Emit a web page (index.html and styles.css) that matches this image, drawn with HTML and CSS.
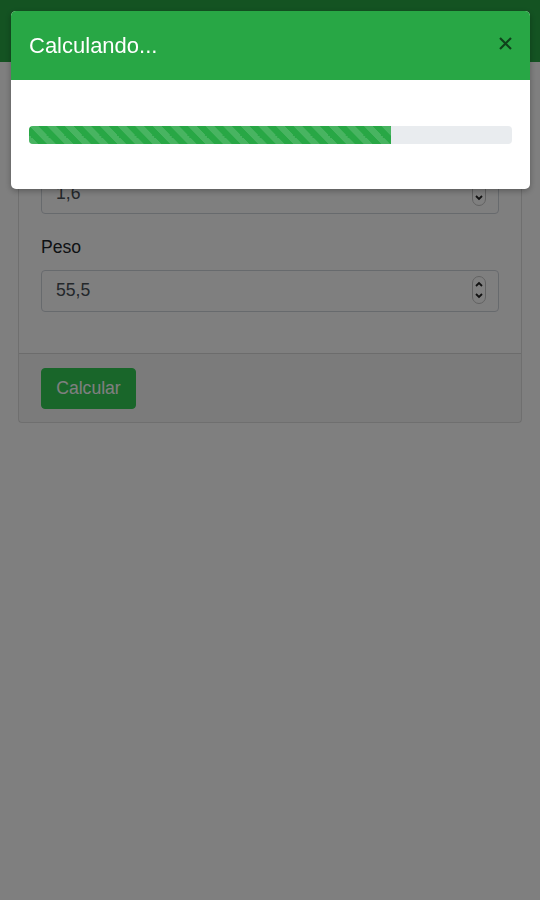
FILE: index.html
```html
<!DOCTYPE html>
<html lang="pt">
<head>
    <meta charset="UTF-8">
    <meta name="viewport" content="width=device-width, initial-scale=1.0">
    <title>Calculadora IMC</title>
    <link rel="stylesheet" href="styles.css">
</head>
<body>
    <nav class="navbar"></nav>

    <div class="page">
        <div class="card">
            <div class="card-body">
                <div class="form-group">
                    <label for="altura">Altura</label>
                    <div class="field">
                        <input type="text" id="altura" class="form-control" value="1,6">
                        <span class="spin">
                            <svg width="8" height="22" viewBox="0 0 8 22"><path d="M1 7 L4 4 L7 7 M1 15 L4 18 L7 15" fill="none" stroke="#222" stroke-width="1.8"/></svg>
                        </span>
                    </div>
                </div>
                <div class="form-group">
                    <label for="peso">Peso</label>
                    <div class="field">
                        <input type="text" id="peso" class="form-control" value="55,5">
                        <span class="spin">
                            <svg width="8" height="22" viewBox="0 0 8 22"><path d="M1 7 L4 4 L7 7 M1 15 L4 18 L7 15" fill="none" stroke="#222" stroke-width="1.8"/></svg>
                        </span>
                    </div>
                </div>
            </div>
            <div class="card-footer">
                <button class="btn">Calcular</button>
            </div>
        </div>
    </div>

    <!-- loading modal -->
    <div class="backdrop"></div>
    <div class="modal">
        <div class="modal-header">
            <h5 class="modal-title">Calculando...</h5>
            <button class="close" aria-label="Fechar">
                <svg width="13" height="13" viewBox="0 0 13 13"><path d="M1 1 L12 12 M12 1 L1 12" stroke="#000" stroke-width="2.2"/></svg>
            </button>
        </div>
        <div class="modal-body">
            <div class="progress">
                <div class="progress-bar" style="width: 75%"></div>
            </div>
        </div>
    </div>
</body>
</html>
```

FILE: styles.css
```css
html {
    font-size: 17.6px;
}

body {
    margin: 0;
    font-family: 'Liberation Sans', Arial, sans-serif;
    font-size: 1rem;
    line-height: 1.5;
    color: #212529;
    background: #fff;
}

.navbar {
    height: 62px;
    background-color: #28a745;
}

.page {
    padding: 52px 18px 0;
}

.card {
    background: #fff;
    border: 1px solid rgba(0,0,0,0.125);
    border-radius: 4px;
}

.card-body {
    padding: 22px 22px 21px;
}

.form-group {
    margin-bottom: 20px;
}

label {
    display: block;
    margin-bottom: 9px;
}

.field {
    position: relative;
}

.form-control {
    display: block;
    width: 100%;
    box-sizing: border-box;
    height: 42px;
    padding: 6px 14px;
    font: inherit;
    color: #495057;
    border: 1px solid #ced4da;
    border-radius: 4px;
    background: #fff;
}

.spin {
    position: absolute;
    right: 13px;
    top: 6px;
    width: 14px;
    height: 28px;
    box-sizing: border-box;
    border: 1px solid #c4c4c4;
    border-radius: 7px;
    display: flex;
    align-items: center;
    justify-content: center;
}

.card-footer {
    padding: 14px 22px 13px;
    background-color: rgba(0,0,0,0.03);
    border-top: 1px solid rgba(0,0,0,0.125);
}

.btn {
    font: inherit;
    line-height: 26.4px;
    padding: 6.6px 14.2px;
    color: #fff;
    background-color: #32cc55;
    border: 1px solid #32cc55;
    border-radius: 4px;
    cursor: pointer;
}

.backdrop {
    position: fixed;
    inset: 0;
    background: rgba(0,0,0,0.5);
}

.modal {
    position: fixed;
    top: 11px;
    left: 11px;
    right: 10px;
    background: #fff;
    border-radius: 5px;
    overflow: hidden;
    box-shadow: 0 2px 6px rgba(0,0,0,0.3);
}

.modal-header {
    display: flex;
    align-items: center;
    justify-content: space-between;
    padding: 18px;
    background-color: #28a745;
}

.modal-title {
    margin: 0;
    font-size: 22px;
    font-weight: normal;
    line-height: 33px;
    color: #fff;
}

.close {
    background: none;
    border: none;
    padding: 0;
    margin-top: -5px;
    opacity: 0.6;
    cursor: pointer;
    line-height: 0;
}

.modal-body {
    padding: 46px 18px 45px;
}

.progress {
    height: 18px;
    background-color: #e9ecef;
    border-radius: 4px;
    overflow: hidden;
}

.progress-bar {
    height: 100%;
    background-color: #28a745;
    background-image: linear-gradient(45deg, rgba(255,255,255,0.15) 25%, transparent 25%, transparent 50%, rgba(255,255,255,0.15) 50%, rgba(255,255,255,0.15) 75%, transparent 75%, transparent);
    background-size: 17.6px 17.6px;
}
```
